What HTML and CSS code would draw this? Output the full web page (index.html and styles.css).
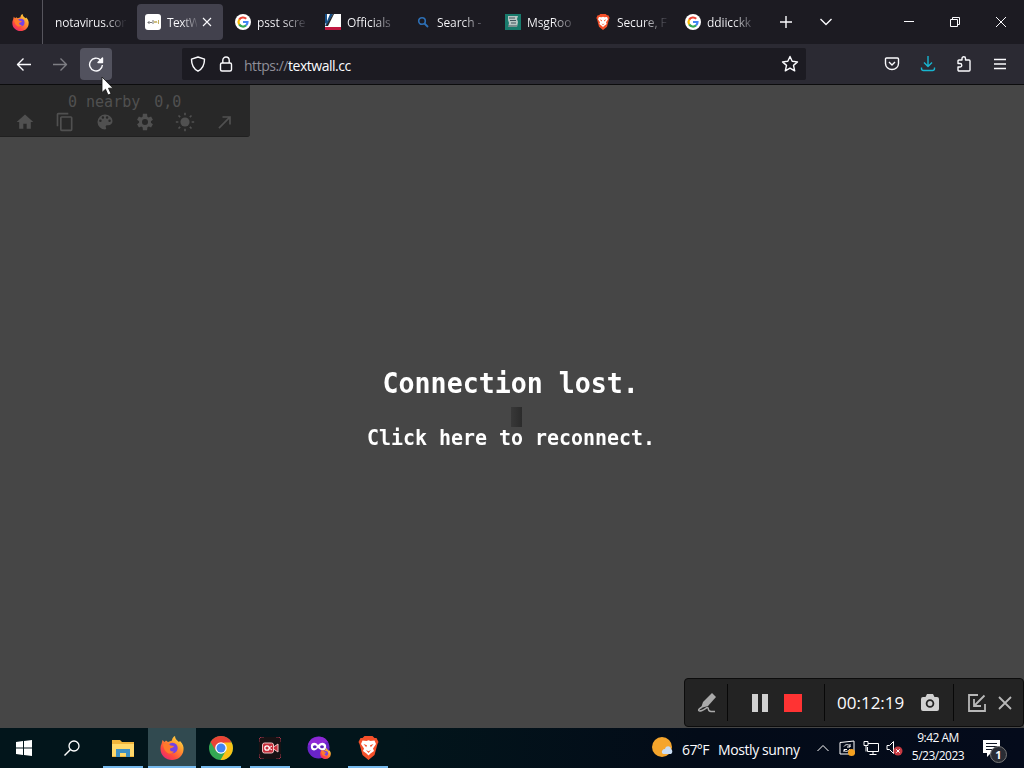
FILE: index.html
```html
<!DOCTYPE html>
<html lang="en">
<head>
    <meta charset="UTF-8">
    <title>TextWall</title>
    <link rel="stylesheet" href="styles.css">
</head>
<body>

    <!-- Shared icons -->
    <svg class="defs" width="0" height="0">
        <symbol id="google" viewBox="0 0 16 16">
            <circle cx="8" cy="8" r="8" fill="#fff"/>
            <g fill="none" stroke-width="2.2">
                <path d="M4.2 5.6A4.5 4.5 0 0 1 11.2 4.8" stroke="#ea4335"/>
                <path d="M4.2 10.4A4.7 4.7 0 0 1 4.2 5.6" stroke="#fbbc05"/>
                <path d="M11 11.4A4.5 4.5 0 0 1 4.2 10.4" stroke="#34a853"/>
                <path d="M8 8h4.5A4.4 4.4 0 0 1 11 11.4" stroke="#4285f4"/>
            </g>
        </symbol>
        <symbol id="firefox" viewBox="0 0 24 24">
            <linearGradient id="fire" x1="1" y1="0" x2=".2" y2="1">
                <stop offset="0" stop-color="#fff44f"/>
                <stop offset=".4" stop-color="#ff9a2e"/>
                <stop offset=".75" stop-color="#ff4a3d"/>
                <stop offset="1" stop-color="#e52678"/>
            </linearGradient>
            <path d="M1.500 8L2.500 4l2 2L6 4.500 8 6l4-1.500c0-2 1-3.500 3-4.500 0 3 2 4 4 6l1-1c3 3 4 6 3.500 9C23 20 18 24 12 24S.5 19.500.5 13c0-2 0-3 1-5z" fill="url(#fire)"/>
            <circle cx="12.500" cy="12" r="5.200" fill="#7542e5"/>
            <path d="M3 8c2-1 4-1 6 0l1.500 1.500 3.500.5c-.5 1.500-2 2-3.500 2.300C9 14 11 16 14 15.500c-3 4-10 2.500-11-7.500z" fill="#ff7a2b"/>
        </symbol>
        <symbol id="brave" viewBox="0 0 20 24">
            <path d="M6 0h8l2 2h2l2 4-1 2-3 11-6 5-6-5L1 8 0 6l2-4h2z" fill="#f4502a"/>
            <path d="M4 4.500l4 .5 2-.7 2 .7 4-.5 1.500 3.500-3 4.500 1 2.500-3.500 2.500-2 2-2-2L4.500 15l1-2.500-3-4.500z" fill="#fff"/>
            <path d="M5 8l3.500 1.300-.8 2zM15 8l-3.500 1.300.8 2zM7.500 14l2.500 1.200 2.500-1.200-2.500 3z" fill="#f4502a"/>
        </symbol>
    </svg>

    <div class="tabbar">
        <div class="pinned"><svg width="17" height="17"><use href="#firefox"/></svg></div>
        <div class="tab first"><span>notavirus.co<i>r</i></span></div>
        <div class="tab active">
            <svg width="16" height="16" viewBox="0 0 16 16"><rect width="16" height="16" rx="3" fill="#fff"/><path d="M2.500 8.500h2M4 7v3M5 8.500h2M8 6v4" stroke="#777"/><path d="M9 7l1 2 1-2 1 2M13.500 6v4" fill="none" stroke="#c4b060"/></svg>
            <span>TextW</span>
            <svg class="close" width="10" height="10" viewBox="0 0 10 10"><path d="M1 1l8 8M9 1L1 9"/></svg>
        </div>
        <div class="tab"><svg width="16" height="16"><use href="#google"/></svg><span>psst scre</span></div>
        <div class="tab">
            <svg width="16" height="16" viewBox="0 0 16 16"><path d="M0 0h16v16H0z" fill="#fff"/><path d="M0 0h2v8L0 10zM5 0h3L2 12H0z" fill="#174f86"/><path d="M8 0h1L3 12H1z" fill="#222"/><path d="M0 13h16v3H0z" fill="#c01840"/></svg>
            <span>Officials</span>
        </div>
        <div class="tab">
            <svg width="16" height="16" viewBox="0 0 16 16"><circle cx="7" cy="7" r="3.300" fill="none" stroke="#2d6fb5" stroke-width="1.600"/><path d="M9.500 9.500L13 13" stroke="#2d6fb5" stroke-width="1.800"/></svg>
            <span>Search -</span>
        </div>
        <div class="tab">
            <svg width="16" height="16" viewBox="0 0 16 16"><path d="M0 0h16v16H0z" fill="#187a6c"/><path d="M3 2h10l-1 3 1 3-1 5H3l1-4-1-3z" fill="#b9c6c4"/><path d="M4 4h6M5 6.500h6M6 9h5M3 12h9" stroke="#40545c"/></svg>
            <span>MsgRoo</span>
        </div>
        <div class="tab"><svg width="16" height="16"><use href="#brave"/></svg><span>Secure, F</span></div>
        <div class="tab"><svg width="16" height="16"><use href="#google"/></svg><span>ddiicckk</span></div>
        <div class="tab-tools">
            <svg width="14" height="14" viewBox="0 0 14 14"><path d="M7 1v12M1 7h12"/></svg>
            <svg width="14" height="14" viewBox="0 0 14 14"><path d="M1.500 4L7 9.500 12.500 4"/></svg>
        </div>
        <div class="window-tools">
            <svg width="12" height="12" viewBox="0 0 12 12"><path d="M1 5.500h10"/></svg>
            <svg width="12" height="12" viewBox="0 0 12 12"><path d="M1.500 3.500h7v7h-7zM3.500 3V1.500h7v7H9"/></svg>
            <svg width="12" height="12" viewBox="0 0 12 12"><path d="M1 1l10 10M11 1L1 11"/></svg>
        </div>
    </div>

    <div class="toolbar">
        <div class="nav">
            <div class="nav-button"><svg width="16" height="16" viewBox="0 0 16 16"><path d="M15 8.500H1.500M7.500 2.500l-6 6 6 6"/></svg></div>
            <div class="nav-button disabled"><svg width="16" height="16" viewBox="0 0 16 16"><path d="M1 8.500h13.500M8.500 2.500l6 6-6 6"/></svg></div>
            <div class="nav-button"><svg width="16" height="16" viewBox="0 0 16 16"><path d="M12.500 4A6.400 6.400 0 1 0 14.400 9"/><path class="solid" d="M14.500 2v4.500H10z"/></svg></div>
        </div>
        <div class="urlbar">
            <svg width="16" height="16" viewBox="0 0 16 16"><path d="M8 1L14.500 3.200C14.500 9 13 12.500 8 15.200 3 12.500 1.500 9 1.500 3.200z"/></svg>
            <svg width="16" height="16" viewBox="0 0 16 16"><rect x="2.500" y="7" width="11" height="8" rx="1.500"/><path d="M4.800 7V4.200a3.200 3.200 0 0 1 6.400 0V7"/></svg>
            <div class="url">https://<b>textwall.cc</b></div>
            <svg width="18" height="18" viewBox="0 0 18 18"><path d="M9 1.500l2.200 4.800 5.300.6-4 3.500 1.200 5.400L9 13.100l-4.700 2.700 1.200-5.400-4-3.500 5.300-.6z"/></svg>
        </div>
        <div class="actions">
            <svg width="16" height="16" viewBox="0 0 16 16"><path d="M2.500 2h11a1 1 0 0 1 1 1v4.500a6.500 6 0 0 1-13 0V3a1 1 0 0 1 1-1zM5 6l3 3 3-3"/></svg>
            <svg class="download" width="16" height="16" viewBox="0 0 16 16"><path d="M8 0v10.500M4 6.500l4 4 4-4M1.500 11.500v1a2 2 0 0 0 2 2h9a2 2 0 0 0 2-2v-1"/></svg>
            <svg width="16" height="16" viewBox="0 0 16 16"><path d="M6 4V2.500a1.700 1.700 0 0 1 3.500 0V4H13a1 1 0 0 1 1 1v9a1 1 0 0 1-1 1H3a1 1 0 0 1-1-1v-3h2a1.500 1.500 0 0 0 0-3.500H2V5a1 1 0 0 1 1-1z"/></svg>
            <svg width="16" height="16" viewBox="0 0 16 16"><path d="M2 3.500h12M2 8h12M2 12.500h12"/></svg>
        </div>
    </div>

    <main class="wall">
        <div class="wall-menu">
            <p>0 nearby<span>0,0</span></p>
            <div class="wall-icons">
                <svg width="20" height="20" viewBox="0 0 24 24"><path d="M10 20v-6h4v6h5v-8h3L12 3 2 12h3v8z"/></svg>
                <svg width="20" height="20" viewBox="0 0 24 24"><path d="M16 1H4a2 2 0 0 0-2 2v14h2V3h12zm3 4H8a2 2 0 0 0-2 2v14a2 2 0 0 0 2 2h11a2 2 0 0 0 2-2V7a2 2 0 0 0-2-2zm0 16H8V7h11z"/></svg>
                <svg width="20" height="20" viewBox="0 0 24 24"><path fill-rule="evenodd" d="M12 3a9 9 0 0 0 0 18 1.500 1.500 0 0 0 1.100-2.500c-.8-1 0-2.500 1.200-2.500H16a5 5 0 0 0 5-5c0-4.400-4-8-9-8zM6.500 12a1.500 1.500 0 1 1 0-3 1.500 1.500 0 0 1 0 3zm3-4a1.500 1.500 0 1 1 0-3 1.500 1.500 0 0 1 0 3zm5 0a1.500 1.500 0 1 1 0-3 1.500 1.500 0 0 1 0 3zm3 4a1.500 1.500 0 1 1 0-3 1.500 1.500 0 0 1 0 3z"/></svg>
                <svg width="20" height="20" viewBox="0 0 24 24"><path fill-rule="evenodd" d="M19.100 13l.1-1-.1-1 2.400-1.700-2.200-3.800-2.800 1.200-1.700-1L14.500 2h-5l-.4 3.700-1.700 1-2.700-1.200-2.200 3.800L4.900 11v2l-2.400 1.700 2.200 3.800 2.700-1.200 1.700 1 .4 3.700h5l.4-3.700 1.700-1 2.700 1.200 2.200-3.800zM12 15.600a3.600 3.600 0 1 1 0-7.200 3.600 3.600 0 0 1 0 7.200z"/></svg>
                <svg width="20" height="20" viewBox="0 0 24 24"><circle cx="12" cy="12" r="5.500"/><path class="rays" d="M12 1v3M12 20v3M1 12h3M20 12h3M4.200 4.200l2 2M17.800 17.800l2 2M4.200 19.800l2-2M17.800 6.200l2-2"/></svg>
                <svg width="20" height="20" viewBox="0 0 24 24"><path d="M9 5v2h6.600L4 18.600 5.400 20 17 8.400V15h2V5z"/></svg>
            </div>
        </div>

        <div class="lost">
            <h1>Connection lost.</h1>
            <i class="cell"></i>
            <h2>Click here to reconnect.</h2>
        </div>

        <div class="recorder">
            <div class="part pen"><svg width="22" height="22" viewBox="0 0 22 22"><path d="M16 1l4 4-8 9-7 2 2-6z" fill="#aaa"/><path d="M6 15c-5 3-4 5 0 3.500s5-4 6-2.500-1 4 7 3.500" fill="none" stroke="#aaa" stroke-width="1.500"/></svg></div>
            <div class="part controls"><i class="pause"></i><i class="stop"></i></div>
            <div class="part timer">
                <span>00:12:19</span>
                <svg width="18" height="17" viewBox="0 0 18 17"><path d="M6 0h6l1.500 3H16a2 2 0 0 1 2 2v10a2 2 0 0 1-2 2H2a2 2 0 0 1-2-2V5a2 2 0 0 1 2-2h2.500z" fill="#d0d0d0"/><circle cx="9" cy="9.500" r="3.400" fill="none" stroke="#222" stroke-width="1.800"/></svg>
            </div>
            <div class="part leave">
                <svg width="18" height="18" viewBox="0 0 18 18"><path d="M10 1H1v16h16V10M16.500 1.500L6 12M6 5v7h7"/></svg>
                <svg width="14" height="14" viewBox="0 0 14 14"><path d="M1 1l12 12M13 1L1 13"/></svg>
            </div>
        </div>
    </main>

    <div class="taskbar">
        <div class="start"><svg width="16" height="16" viewBox="0 0 16 16"><path d="M0 2l7-1v6.500H0zM8 1l8-1v7.500H8zM0 8.500h7V15l-7-1zM8 8.500h8V16l-8-1z" fill="#fff"/></svg></div>
        <div class="start"><svg width="16" height="16" viewBox="0 0 16 16"><circle cx="10" cy="6" r="5" fill="none" stroke="#fff" stroke-width="1.300"/><path d="M6.500 9.500L.5 15.500" stroke="#fff" stroke-width="1.400"/></svg></div>
        <div class="app"><svg width="22" height="19" viewBox="0 0 22 19"><path d="M0 1h8l2 2h12v15H0z" fill="#f0b53c"/><path d="M0 5h22v12H0z" fill="#ffd96b"/><path d="M4 10h14v8h-4v-4H8v4H4z" fill="#3f90c4"/></svg></div>
        <div class="app current"><svg width="24" height="24"><use href="#firefox"/></svg></div>
        <div class="app">
            <svg width="24" height="24" viewBox="0 0 24 24"><circle cx="12" cy="12" r="12" fill="#34a853"/><path d="M1.600 6A12 12 0 0 1 22.400 6L12 12z" fill="#ea4335"/><path d="M1.600 6L7 15l5-3V6z" fill="#ea4335"/><path d="M22.600 6.500A12 12 0 0 1 11.500 24L17 14.500 15 6.500z" fill="#fbc116"/><circle cx="12" cy="12" r="5.800" fill="#fff"/><circle cx="12" cy="12" r="4.500" fill="#4285f4"/></svg>
        </div>
        <div class="app">
            <svg width="22" height="22" viewBox="0 0 22 22"><rect width="22" height="22" rx="3" fill="#171214"/><path d="M0 5V2l2-2h3M17 0h3l2 2v3M22 17v3l-2 2h-3M5 22H2l-2-2v-3" fill="none" stroke="#9b3548"/><path d="M14.500 10l4.500-3v8l-4.500-3" fill="#c52e3a" stroke="#f2c4c4"/><rect x="3.500" y="6" width="11" height="10" rx="2" fill="#c52e3a" stroke="#f2c4c4"/><circle cx="8" cy="11" r="2.200" fill="none" stroke="#fff" stroke-width="1.300"/><path d="M10 11l3-2M10 11l3 2" stroke="#fff"/></svg>
        </div>
        <div class="app idle">
            <svg width="24" height="24" viewBox="0 0 24 24"><circle cx="11.500" cy="11.500" r="11" fill="#6a24c8"/><path d="M1 9A11 11 0 0 1 21 6L12 8z" fill="#8e28d5"/><path d="M4 9c1-3 5-3 7 0 3-3 6-3 8 0 1 6-4 7-8 3-3 4-8 3-7-3z" fill="#fff"/><ellipse cx="7.800" cy="10.800" rx="1.900" ry="1.500" fill="#5b22b8"/><ellipse cx="15" cy="10.800" rx="1.900" ry="1.500" fill="#5b22b8"/><use href="#firefox" x="13" y="12" width="11" height="11"/></svg>
        </div>
        <div class="app"><svg width="21" height="24"><use href="#brave"/></svg></div>

        <div class="tray">
            <svg class="weather" width="23" height="22" viewBox="0 0 23 22"><circle cx="10" cy="10" r="10" fill="#f5a52c"/><path d="M10 16a3 3 0 0 1 3-4c1-4 6-3 6 0a3 3 0 0 1 0 5h-7a2 2 0 0 1-2-1z" fill="#c9dcf2"/></svg>
            <span class="temp">67°F</span>
            <span class="sky">Mostly sunny</span>
            <svg class="up" width="12" height="8" viewBox="0 0 12 8"><path d="M.5 7L6 1.500 11.500 7"/></svg>
            <svg class="sync" width="17" height="17" viewBox="0 0 17 17"><path d="M1 2.500L15 1v13H1z M5 6.500c2-3 5-2 6 0M11 4v3H8M11 9c-2 3-5 3-6 1M5 12V9.500h3"/><circle class="orange" cx="12.500" cy="12.500" r="3.500"/></svg>
            <svg class="net" width="17" height="16" viewBox="0 0 17 16"><path d="M5 3.500h10.500v8H4.500V7M10 11.500v3M6.500 14.500h7M1 1.500h4v4H1zM3 5.500v6"/></svg>
            <svg class="sound" width="17" height="16" viewBox="0 0 17 16"><path d="M1 5.500h2.500l4-4v12l-4-4H1z"/><circle class="red" cx="12" cy="11" r="4.500"/><path d="M10.300 9.300l3.400 3.400M13.700 9.300l-3.400 3.400"/></svg>
            <div class="clock"><div class="time">9:42 AM</div><div class="date">5/23/2023</div></div>
            <div class="notes">
                <svg width="17" height="17" viewBox="0 0 17 17"><path d="M0 0h17v13H8l-4 4v-4H0z" fill="#fff"/><path d="M3 3.500h11M3 6.500h11M3 9.500h7" stroke="#101624"/></svg>
                <b>1</b>
            </div>
        </div>
    </div>

    <svg class="cursor" width="13" height="20" viewBox="0 0 13 20"><path d="M1 1v15.500l3.500-3.300L7 19l3-1.200-2.500-5.600H12z" fill="#fff" stroke="#111" stroke-width=".8"/></svg>

</body>
</html>
```
FILE: styles.css
```css
* {
    box-sizing: border-box;
}

body {
    margin: 0;
    width: 1024px;
    height: 768px;
    overflow: hidden;
    display: flex;
    flex-direction: column;
    position: relative;
    background: #464646;
    color: #fbfbfe;
    font-family: "Open Sans", "Noto Sans", sans-serif;
}

svg {
    display: block;
    flex: none;
}

.defs {
    position: absolute;
}

/* Tabs */
.tabbar {
    display: flex;
    height: 44px;
    background: #1c1b22;
    font-size: 12px;
}

.pinned {
    width: 43px;
    padding: 14px 0 0 12px;
    border-right: 1px solid #56555d;
}

.tab {
    width: 90px;
    height: 36px;
    margin-top: 4px;
    padding-left: 8px;
    display: flex;
    align-items: center;
    gap: 6px;
    flex: none;
}

/* long titles fade out on the right */
.tab span {
    width: 50px;
    line-height: 21px;
    white-space: nowrap;
    letter-spacing: -0.1px;
    color: transparent;
    background: linear-gradient(to right, #fbfbfe 50%, #3a3942 95%);
    -webkit-background-clip: text;
    background-clip: text;
}

.tab.first {
    width: 94px;
    padding-left: 12px;
}

.tab.first span {
    width: 72px;
    letter-spacing: -0.2px;
    background-image: linear-gradient(to right, #fbfbfe 70%, #33323a 95%);
}

.tab i {
    font-style: normal;
}

.tab.active {
    width: 86px;
    margin-right: 4px;
    border-radius: 4px;
    background: #42414d;
}

.tab.active span {
    width: 30px;
    letter-spacing: -0.5px;
    background-image: linear-gradient(to right, #fbfbfe 50%, #5c5b66 100%);
}

.close,
.tab-tools svg,
.window-tools svg,
.toolbar svg {
    fill: none;
    stroke: #fbfbfe;
    stroke-width: 1.4;
    stroke-linejoin: round;
}

.close {
    stroke-width: 1.1;
    margin-left: -1px;
}

.tab-tools {
    display: flex;
    align-items: center;
    gap: 26px;
    padding-left: 12px;
}

.window-tools {
    display: flex;
    align-items: center;
    gap: 34px;
    margin-left: auto;
    padding-right: 17px;
}

.window-tools svg {
    stroke-width: 1;
}

/* Toolbar */
.toolbar {
    display: flex;
    align-items: center;
    height: 41px;
    background: #2b2a33;
    border-bottom: 1px solid #0c0c0d;
}

.nav {
    display: flex;
    gap: 4px;
    width: 182px;
    padding-left: 8px;
}

.nav-button {
    width: 32px;
    height: 32px;
    padding: 8px;
    border-radius: 4px;
}

.nav-button.disabled {
    opacity: 0.4;
}

.nav-button:last-child {
    background: #52525e;
}

.solid {
    fill: #fbfbfe;
}

.urlbar {
    display: flex;
    align-items: center;
    width: 624px;
    height: 32px;
    padding: 0 7px 0 8px;
    gap: 12px;
    border-radius: 2px;
    background: #1c1b22;
}

.url {
    flex: 1;
    margin: 2px 0 0 -2px;
    font-size: 14px;
    letter-spacing: -0.47px;
    color: #8f8f98;
}

.url b {
    font-weight: normal;
    color: #fbfbfe;
}

.actions {
    display: flex;
    gap: 20px;
    margin-left: auto;
    padding-right: 16px;
}

.toolbar .download {
    stroke: #18b5d0;
}

/* Page */
.wall {
    flex: 1;
    position: relative;
    background: #464646;
    font-family: "DejaVu Sans Mono", monospace;
}

.wall-menu {
    width: 250px;
    height: 52px;
    padding-top: 8px;
    border-radius: 0 0 3px 0;
    background: #282828;
    border-bottom: 1px solid #202020;
    color: #505050;
}

.wall-menu p {
    margin: 0;
    padding-left: 68px;
    font-size: 15px;
    line-height: 18px;
}

.wall-menu span {
    margin-left: 14px;
}

.wall-icons {
    display: flex;
    gap: 20px;
    padding: 1px 15px;
    fill: #505050;
}

.rays {
    stroke: #505050;
    stroke-width: 2;
}

.lost {
    position: absolute;
    top: 278px;
    left: 0;
    width: 1022px;
    display: flex;
    flex-direction: column;
    align-items: center;
    color: #fff;
}

.lost h1,
.lost h2 {
    margin: 0;
    white-space: nowrap;
}

.lost h1 {
    font-size: 29px;
    line-height: 40px;
    transform: scaleX(0.917);
}

.lost h2 {
    font-size: 22px;
    line-height: 28px;
    transform: scaleX(0.906);
}

.cell {
    width: 11px;
    height: 20px;
    margin: 4px 0 -3px 10px;
    background: linear-gradient(to right, #383838, #2b2b2b);
}

/* Recorder */
.recorder {
    position: absolute;
    right: 0;
    bottom: 1px;
    width: 340px;
    height: 49px;
    padding: 5px 0;
    display: flex;
    border: 1px solid #0c0c0c;
    border-radius: 4px;
    background: #232323;
}

.part {
    display: flex;
    align-items: center;
    border-right: 1px solid #080808;
}

.pen {
    width: 43px;
    padding-left: 11px;
}

.controls {
    width: 97px;
    padding-left: 24px;
    gap: 16px;
}

.pause {
    width: 16px;
    height: 18px;
    border: solid #d0d0d0;
    border-width: 0 6px;
}

.stop {
    width: 18px;
    height: 18px;
    background: #ff3333;
}

.timer {
    width: 129px;
    padding-left: 12px;
    gap: 15px;
    font: 17px "Open Sans", sans-serif;
    letter-spacing: 0;
}

.timer span {
    width: 69px;
    white-space: nowrap;
}

.leave {
    padding-left: 14px;
    gap: 12px;
    border: 0;
    fill: none;
    stroke: #b8b8b8;
    stroke-width: 1.8;
}

/* Taskbar */
.taskbar {
    display: flex;
    height: 40px;
    background: linear-gradient(to right, #02151b 0, #02151b 400px, #030b18 700px, #040b1b 100%);
}

.start {
    width: 48px;
    display: flex;
    align-items: center;
    justify-content: center;
}

.app {
    width: 40px;
    margin: 0 5px 0 4px;
    padding-top: 2px;
    display: flex;
    align-items: center;
    justify-content: center;
    border-bottom: 2px solid #76b9ed;
}

.app:nth-child(3) {
    margin: 0 5px 0 7px;
}

.app.current {
    width: 48px;
    margin: 0 1px 0 0;
    background: #314a50;
}

.app.idle {
    border-color: transparent;
}

.tray {
    display: flex;
    align-items: center;
    margin-left: auto;
    width: 372px;
    font-size: 14px;
    white-space: nowrap;
    fill: none;
    stroke: #fff;
}

.weather {
    stroke: none;
}

.temp {
    width: 29px;
    margin: 2px 0 0 7px;
    letter-spacing: -0.6px;
}

.sky {
    width: 83px;
    margin: 2px 0 0 7px;
    letter-spacing: -0.4px;
}

.up {
    margin-left: 16px;
}

.sync {
    margin-left: 10px;
}

.net {
    margin-left: 7px;
}

.sound {
    margin-left: 6px;
}

.orange {
    fill: #f5a11f;
    stroke: none;
}

.red {
    fill: #c63a42;
    stroke: none;
}

.clock {
    width: 54px;
    margin: -2px 0 0 8px;
    text-align: center;
    font-size: 12px;
    line-height: 18px;
    letter-spacing: -0.5px;
}

.notes {
    position: relative;
    margin-left: 18px;
    stroke: none;
}

.notes b {
    position: absolute;
    left: 7px;
    top: 6px;
    width: 17px;
    height: 17px;
    border: 1px solid #777;
    border-radius: 50%;
    background: #292c34;
    font-size: 11px;
    line-height: 15px;
    text-align: center;
}

.cursor {
    position: absolute;
    left: 101px;
    top: 76px;
}
```
